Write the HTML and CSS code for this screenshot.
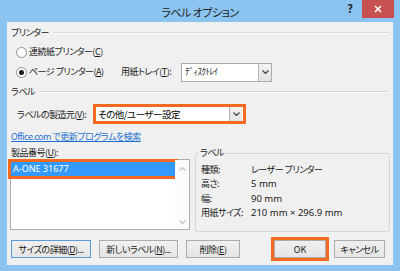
FILE: index.html
```html
<!DOCTYPE html>
<html lang="ja">
<head>
  <meta charset="UTF-8" />
  <meta name="viewport" content="width=device-width, initial-scale=1.0"/>
  <link rel="stylesheet" href="styles.css">
  <title>ラベル オプション</title>
</head>
<body>
  <div class="window">
    <div class="titlebar">
      <span></span>
      <span class="title">ラベル オプション</span>
      <div class="caption-btns">
        <span class="help">?</span>
        <span class="close">
          <svg width="8" height="8" viewBox="0 0 8 8"><path d="M1 1 L7 7 M7 1 L1 7" stroke="#fff" stroke-width="1.6"/></svg>
        </span>
      </div>
    </div>

    <div class="client">
      <div class="section-head first"><span>プリンター</span></div>

      <div class="radio-row r1">
        <span class="radio"></span>
        <span>連続紙プリンター(<u>C</u>)</span>
      </div>

      <div class="radio-row r2">
        <span class="radio checked"></span>
        <span class="radio-text">ページ プリンター(<u>A</u>)</span>
        <span class="tray-label">用紙トレイ(<u>T</u>):</span>
        <div class="select tray">
          <span class="value">ﾃﾞｨｽｸﾄﾚｲ</span>
          <span class="drop"><svg width="7" height="4" viewBox="0 0 7 4"><path d="M0.5 0.5 L3.5 3.5 L6.5 0.5" fill="none" stroke="#444" stroke-width="1.2"/></svg></span>
        </div>
      </div>

      <div class="section-head"><span>ラベル</span></div>

      <div class="maker-row">
        <span class="maker-label">ラベルの製造元(<u>V</u>):</span>
        <div class="select maker">
          <span class="value">その他/ユーザー設定</span>
          <span class="drop"><svg width="7" height="4" viewBox="0 0 7 4"><path d="M0.5 0.5 L3.5 3.5 L6.5 0.5" fill="none" stroke="#444" stroke-width="1.2"/></svg></span>
        </div>
      </div>

      <a class="link" href="#">Office.com で更新プログラムを検索</a>

      <div class="lower">
        <div class="product">
          <div class="product-label">製品番号(<u>U</u>):</div>
          <div class="listbox">
            <div class="items">
              <div class="item selected">A-ONE 31677</div>
            </div>
            <div class="scroll">
              <svg width="7" height="4" viewBox="0 0 7 4"><path d="M0.5 3.5 L3.5 0.5 L6.5 3.5" fill="none" stroke="#c4c4c4" stroke-width="1.2"/></svg>
              <svg width="7" height="4" viewBox="0 0 7 4"><path d="M0.5 0.5 L3.5 3.5 L6.5 0.5" fill="none" stroke="#c4c4c4" stroke-width="1.2"/></svg>
            </div>
          </div>
        </div>

        <fieldset class="info">
          <legend>ラベル</legend>
          <div class="info-grid">
            <span>種類:</span><span>レーザー プリンター</span>
            <span>高さ:</span><span class="num">5 mm</span>
            <span>幅:</span><span class="num">90 mm</span>
            <span>用紙サイズ:</span><span class="num">210 mm × 296.9 mm</span>
          </div>
        </fieldset>
      </div>

      <div class="buttons">
        <button class="btn default w-size">サイズの詳細(<u>D</u>)...</button>
        <button class="btn w-new">新しいラベル(<u>N</u>)...</button>
        <button class="btn w-del">削除(<u>E</u>)</button>
        <button class="btn ok">OK</button>
        <button class="btn w-cancel">キャンセル</button>
      </div>
    </div>
  </div>
</body>
</html>
```

FILE: styles.css
```css
body {
  margin: 0;
  font-family: "Noto Sans CJK JP", "Noto Sans", sans-serif;
  font-feature-settings: "palt";
  font-size: 9px;
  letter-spacing: -0.5px;
  color: #1a1a1a;
  white-space: nowrap;
}

.window {
  width: 400px;
  height: 271px;
  background: #8bc3f1;
  padding: 0 7px 6px;
  box-sizing: border-box;
  display: flex;
  flex-direction: column;
}

.titlebar {
  height: 22px;
  display: grid;
  grid-template-columns: 1fr auto 1fr;
  margin: 0 -7px;
}

.title {
  font-size: 11px;
  line-height: 24px;
  color: #222;
}

.caption-btns {
  display: flex;
  justify-content: flex-end;
  align-items: flex-start;
}

.help {
  font-size: 11px;
  font-weight: bold;
  line-height: 17px;
  margin-right: 9px;
  color: #222;
  letter-spacing: 0;
}

.close {
  width: 32px;
  height: 18px;
  background: #c75050;
  display: flex;
  align-items: center;
  justify-content: center;
  margin-right: 6px;
}

.client {
  flex: 1;
  background: #f0f0f0;
}

u {
  text-decoration: underline;
  text-underline-offset: 1px;
}

/* section headers with etched line */
.section-head {
  display: flex;
  align-items: center;
  height: 12px;
  line-height: 12px;
  margin: 4px 4px 0 4px;
}

.section-head.first {
  margin-top: 5px;
}

.section-head::after {
  content: "";
  flex: 1;
  height: 1px;
  background: #dadada;
  border-bottom: 1px solid #fff;
  margin-left: 4px;
}

.radio-row {
  display: flex;
  align-items: center;
  padding-left: 9px;
  line-height: 12px;
}

.r1 {
  margin-top: 7px;
  height: 12px;
}

.r2 {
  margin-top: 4px;
  height: 20px;
}

.radio {
  width: 11px;
  height: 11px;
  border: 1px solid #8f8f8f;
  border-radius: 50%;
  background: #fff;
  box-sizing: border-box;
  margin-right: 2px;
  display: flex;
  align-items: center;
  justify-content: center;
}

.radio.checked::after {
  content: "";
  width: 5px;
  height: 5px;
  border-radius: 50%;
  background: #1a1a1a;
}

.radio-text {
  width: 92px;
}

.tray-label {
  width: 60px;
}

.select {
  display: flex;
  align-items: stretch;
  background: #fff;
  box-sizing: border-box;
}

.select .value {
  flex: 1;
  padding-left: 3px;
  display: flex;
  align-items: center;
}

.select .drop {
  width: 12px;
  background: linear-gradient(#f2f2f2, #e2e2e2);
  border-left: 1px solid #b5b5b5;
  display: flex;
  align-items: center;
  justify-content: center;
}

.tray {
  width: 91px;
  height: 19px;
  border: 1px solid #acacac;
}

.maker-row {
  display: flex;
  align-items: center;
  height: 20px;
  margin-top: 6px;
  padding-left: 10px;
}

.maker-label {
  width: 76px;
}

.maker {
  width: 153px;
  height: 20px;
  border: 3px solid #f26a1f;
}

.maker .value {
  color: #000;
  padding-left: 2px;
  font-size: 9.5px;
}

.maker .drop {
  margin: 0 1px 0 0;
}

.link {
  display: block;
  margin: 7px 0 0 4px;
  line-height: 12px;
  color: #1e6fd2;
  text-decoration: underline;
}

.lower {
  display: flex;
  gap: 5px;
  margin-top: 4px;
  padding-left: 3px;
}

.product {
  width: 180px;
}

.product-label {
  line-height: 12px;
  padding-left: 1px;
}

.listbox {
  height: 71px;
  border: 1px solid #abadb3;
  background: #fff;
  box-sizing: border-box;
  display: flex;
}

.items {
  flex: 1;
  padding-top: 2px;
}

.item {
  height: 14px;
  line-height: 14px;
  padding-left: 2px;
  font-family: "Noto Sans", sans-serif;
  font-size: 9px;
  letter-spacing: 0;
}

.item.selected {
  background: #3399ff;
  color: #fff;
  outline: 3px solid #f26a1f;
}

.scroll {
  width: 14px;
  display: flex;
  flex-direction: column;
  justify-content: space-between;
  align-items: center;
  padding: 7px 0 5px;
  background: #fbfbfb;
}

.info {
  width: 195px;
  margin: 0;
  padding: 0 0 0 5px;
  border: 1px solid #d6d6d6;
  border-radius: 3px;
  box-sizing: border-box;
  height: 85px;
}

.info legend {
  padding: 0 1px;
  margin-left: -2px;
  line-height: 12px;
}

.info-grid {
  display: grid;
  grid-template-columns: 50px auto;
  grid-auto-rows: 14.5px;
  align-items: center;
  margin-top: 3px;
}

.info-grid .num {
  font-family: "Noto Sans", "Noto Sans CJK JP", sans-serif;
  font-size: 9.5px;
  letter-spacing: 0;
}

.buttons {
  display: flex;
  margin-top: 8px;
  padding-left: 4px;
  gap: 8px;
}

.btn {
  height: 18px;
  padding: 0;
  font: inherit;
  letter-spacing: inherit;
  color: #1a1a1a;
  border: 1px solid #acacac;
  background: linear-gradient(#f0f0f0, #e5e5e5);
  white-space: nowrap;
}

.btn.default {
  border-color: #5a9ad8;
}

.w-size {
  width: 80px;
}

.w-new {
  width: 79px;
}

.w-del {
  width: 54px;
}

.ok {
  width: 52px;
  margin-left: 26px;
  outline: 3px solid #f26a1f;
  letter-spacing: 0;
}

.w-cancel {
  width: 51px;
}
```
